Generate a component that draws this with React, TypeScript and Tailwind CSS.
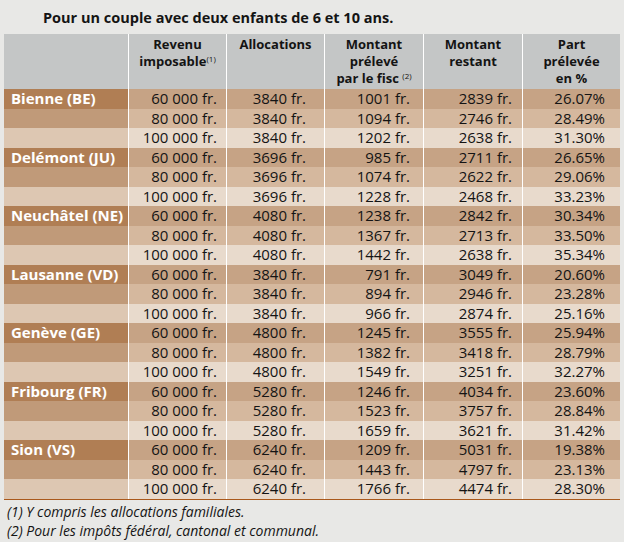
const cities = [
  { name: 'Bienne (BE)', alloc: '3840', rows: [['1001', '2839', '26.07'], ['1094', '2746', '28.49'], ['1202', '2638', '31.30']] },
  { name: 'Delémont (JU)', alloc: '3696', rows: [['985', '2711', '26.65'], ['1074', '2622', '29.06'], ['1228', '2468', '33.23']] },
  { name: 'Neuchâtel (NE)', alloc: '4080', rows: [['1238', '2842', '30.34'], ['1367', '2713', '33.50'], ['1442', '2638', '35.34']] },
  { name: 'Lausanne (VD)', alloc: '3840', rows: [['791', '3049', '20.60'], ['894', '2946', '23.28'], ['966', '2874', '25.16']] },
  { name: 'Genève (GE)', alloc: '4800', rows: [['1245', '3555', '25.94'], ['1382', '3418', '28.79'], ['1549', '3251', '32.27']] },
  { name: 'Fribourg (FR)', alloc: '5280', rows: [['1246', '4034', '23.60'], ['1523', '3757', '28.84'], ['1659', '3621', '31.42']] },
  { name: 'Sion (VS)', alloc: '6240', rows: [['1209', '5031', '19.38'], ['1443', '4797', '23.13'], ['1766', '4474', '28.30']] },
]

const incomes = ['60 000', '80 000', '100 000']
const firstColBg = ['bg-[#b07e54]', 'bg-[#c09a79]', 'bg-[#ddc7b2]']
const rowBg = ['bg-[#c6a385]', 'bg-[#d5b89e]', 'bg-[#e8dacc]']

export default function App() {
  return (
    <div
      className="w-[624px] h-[542px] bg-[#e8e8e6] text-[#141414]"
      style={{ fontFamily: '"Open Sans", "Noto Sans", sans-serif' }}
    >
      {/* Title */}
      <div className="h-[34px] pl-[43px] pt-[8px] text-[14.5px] font-bold leading-[20px]">
        Pour un couple avec deux enfants de 6 et 10 ans.
      </div>

      {/* Table */}
      <div className="ml-[4px] w-[616px] border-b border-[#a9581b]">
        {/* Header */}
        <div className="flex h-[55px] bg-[#c4c6c6] text-[13px] font-bold leading-[17px] text-center">
          <div className="w-[124px]" />
          <div className="w-[98px] border-l border-white pt-[2px]">
            Revenu
            <br />
            imposable<sup className="text-[8px] font-normal">(1)</sup>
          </div>
          <div className="w-[98px] border-l border-white pt-[2px]">Allocations</div>
          <div className="w-[99px] border-l border-white pt-[2px]">
            Montant
            <br />
            prélevé
            <br />
            par le fisc <sup className="text-[8px] font-normal">(2)</sup>
          </div>
          <div className="w-[99px] border-l border-white pt-[2px]">
            Montant
            <br />
            restant
          </div>
          <div className="w-[98px] border-l border-white pt-[2px]">
            Part
            <br />
            prélevée
            <br />
            en %
          </div>
        </div>

        {/* Rows */}
        {cities.map((city) =>
          city.rows.map((r, i) => (
            <div key={city.name + i} className="flex h-[19.5px] text-[15px] leading-[19.5px]">
              <div className={`w-[124px] pl-[7px] font-bold text-white ${firstColBg[i]}`}>
                {i === 0 ? city.name : ''}
              </div>
              <div className={`w-[98px] border-l border-white pr-[9px] text-right ${rowBg[i]}`}>
                {incomes[i]} fr.
              </div>
              <div className={`w-[98px] border-l border-white pr-[18px] text-right ${rowBg[i]}`}>
                {city.alloc} fr.
              </div>
              <div className={`w-[99px] border-l border-white pr-[13px] text-right ${rowBg[i]}`}>
                {r[0]} fr.
              </div>
              <div className={`w-[99px] border-l border-white pr-[10px] text-right ${rowBg[i]}`}>
                {r[1]} fr.
              </div>
              <div className={`w-[98px] border-l border-white pr-[15px] text-right ${rowBg[i]}`}>
                {r[2]}%
              </div>
            </div>
          ))
        )}
      </div>

      {/* Footnotes */}
      <div className="pl-[7px] pt-[2px] text-[14px] italic leading-[19px]">
        <div>(1) Y compris les allocations familiales.</div>
        <div>(2) Pour les impôts fédéral, cantonal et communal.</div>
      </div>
    </div>
  )
}
